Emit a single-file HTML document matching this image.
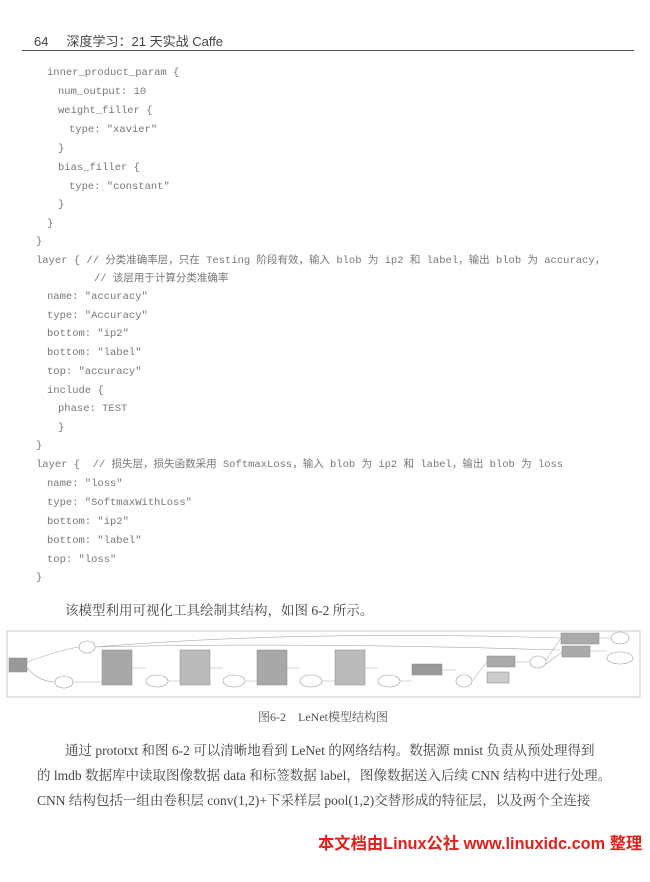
<!DOCTYPE html>
<html><head><meta charset="utf-8"><style>
body{margin:0;background:#fff;width:650px;height:882px;position:relative;overflow:hidden;font-family:"Liberation Sans","Noto Sans CJK SC",sans-serif}
.hd{position:absolute;left:34px;top:31px;font-size:13px;color:#444}
.rule{position:absolute;left:22px;top:50px;width:612px;height:1px;background:#555}
.c{position:absolute;font-family:"Liberation Mono","Noto Sans CJK SC",monospace;font-size:10.5px;color:#777;white-space:pre;line-height:12px}
.t{position:absolute;font-family:"Liberation Serif","Noto Serif CJK SC",serif;font-size:13.5px;color:#444;white-space:pre}
.ft{position:absolute;left:318px;top:830px;font-size:16.3px;font-weight:bold;color:#e0201a}
</style></head><body>
<div class="hd">64&nbsp;&nbsp;&nbsp;&nbsp;&nbsp;深度学习：21 天实战 Caffe</div>
<div class="rule"></div>
<div class="c" style="left:47px;top:67px">inner_product_param {</div>
<div class="c" style="left:58px;top:86px">num_output: 10</div>
<div class="c" style="left:58px;top:105px">weight_filler {</div>
<div class="c" style="left:69px;top:124px">type: "xavier"</div>
<div class="c" style="left:58px;top:143px">}</div>
<div class="c" style="left:58px;top:162px">bias_filler {</div>
<div class="c" style="left:69px;top:181px">type: "constant"</div>
<div class="c" style="left:58px;top:199px">}</div>
<div class="c" style="left:47px;top:218px">}</div>
<div class="c" style="left:36px;top:236px">}</div>
<div class="c" style="left:36px;top:255px">layer { // 分类准确率层，只在 Testing 阶段有效，输入 blob 为 ip2 和 label，输出 blob 为 accuracy，</div>
<div class="c" style="left:94px;top:273px">// 该层用于计算分类准确率</div>
<div class="c" style="left:47px;top:291px">name: "accuracy"</div>
<div class="c" style="left:47px;top:310px">type: "Accuracy"</div>
<div class="c" style="left:47px;top:328px">bottom: "ip2"</div>
<div class="c" style="left:47px;top:347px">bottom: "label"</div>
<div class="c" style="left:47px;top:366px">top: "accuracy"</div>
<div class="c" style="left:47px;top:385px">include {</div>
<div class="c" style="left:58px;top:403px">phase: TEST</div>
<div class="c" style="left:58px;top:422px">}</div>
<div class="c" style="left:36px;top:440px">}</div>
<div class="c" style="left:36px;top:459px">layer {  // 损失层，损失函数采用 SoftmaxLoss，输入 blob 为 ip2 和 label，输出 blob 为 loss</div>
<div class="c" style="left:47px;top:478px">name: "loss"</div>
<div class="c" style="left:47px;top:497px">type: "SoftmaxWithLoss"</div>
<div class="c" style="left:47px;top:516px">bottom: "ip2"</div>
<div class="c" style="left:47px;top:535px">bottom: "label"</div>
<div class="c" style="left:47px;top:554px">top: "loss"</div>
<div class="c" style="left:36px;top:572px">}</div>
<div class="t" style="left:65px;top:599px">该模型利用可视化工具绘制其结构，如图 6-2 所示。</div>
<svg style="position:absolute;left:0;top:620px" width="650" height="80" viewBox="0 0 650 80">
<rect x="7" y="11" width="633" height="66" fill="none" stroke="#ccc"/>
<g fill="#999" stroke="#888" stroke-width="0.5">
<rect x="9" y="38" width="18" height="14"/>
<rect x="102" y="30" width="30" height="35" fill="#a8a8a8"/>
<rect x="180" y="30" width="30" height="35" fill="#bbb"/>
<rect x="257" y="30" width="30" height="35" fill="#a8a8a8"/>
<rect x="335" y="30" width="30" height="35" fill="#bbb"/>
<rect x="412" y="44" width="30" height="11" fill="#999"/>
<rect x="487" y="36" width="28" height="11" fill="#aaa"/>
<rect x="487" y="52" width="22" height="11" fill="#ccc"/>
<rect x="562" y="26" width="28" height="11" fill="#aaa"/>
<rect x="561" y="13" width="38" height="11" fill="#aaa"/>
</g>
<g fill="#fff" stroke="#999" stroke-width="0.6">
<ellipse cx="87" cy="27" rx="8" ry="6"/><ellipse cx="64" cy="62" rx="9" ry="6"/>
<ellipse cx="157" cy="61" rx="11" ry="6"/><ellipse cx="234" cy="61" rx="11" ry="6"/>
<ellipse cx="311" cy="61" rx="11" ry="6"/><ellipse cx="389" cy="61" rx="11" ry="6"/>
<ellipse cx="464" cy="61" rx="8" ry="6"/><ellipse cx="538" cy="42" rx="8" ry="6"/>
<ellipse cx="620" cy="18" rx="9" ry="6"/><ellipse cx="620" cy="38" rx="13" ry="6"/>
</g>
<g stroke="#aaa" stroke-width="0.6" fill="none">
<path d="M27 42 Q60 30 79 27 M95 27 Q300 10 561 18 M95 27 Q300 22 560 30 M27 48 Q40 62 55 62 M73 62 H102 M132 48 H146 M168 61 H180 M210 48 H223 M245 61 H257 M287 48 H300 M322 61 H335 M365 48 H378 M400 61 H412 M442 50 H456 M472 61 L487 42 M515 42 H530 M546 40 L561 18 M546 44 L562 32 M590 31 H607 M599 18 H611"/>
</g>
</svg>
<div class="t" style="left:258px;top:708px;font-size:12px;color:#555">图6-2　LeNet模型结构图</div>
<div class="t" style="left:65px;top:739px">通过 prototxt 和图 6-2 可以清晰地看到 LeNet 的网络结构。数据源 mnist 负责从预处理得到</div>
<div class="t" style="left:37px;top:764px">的 lmdb 数据库中读取图像数据 data 和标签数据 label，图像数据送入后续 CNN 结构中进行处理。</div>
<div class="t" style="left:37px;top:789px">CNN 结构包括一组由卷积层 conv(1,2)+下采样层 pool(1,2)交替形成的特征层，以及两个全连接</div>
<div class="ft">本文档由Linux公社 www.linuxidc.com 整理</div>
</body></html>
